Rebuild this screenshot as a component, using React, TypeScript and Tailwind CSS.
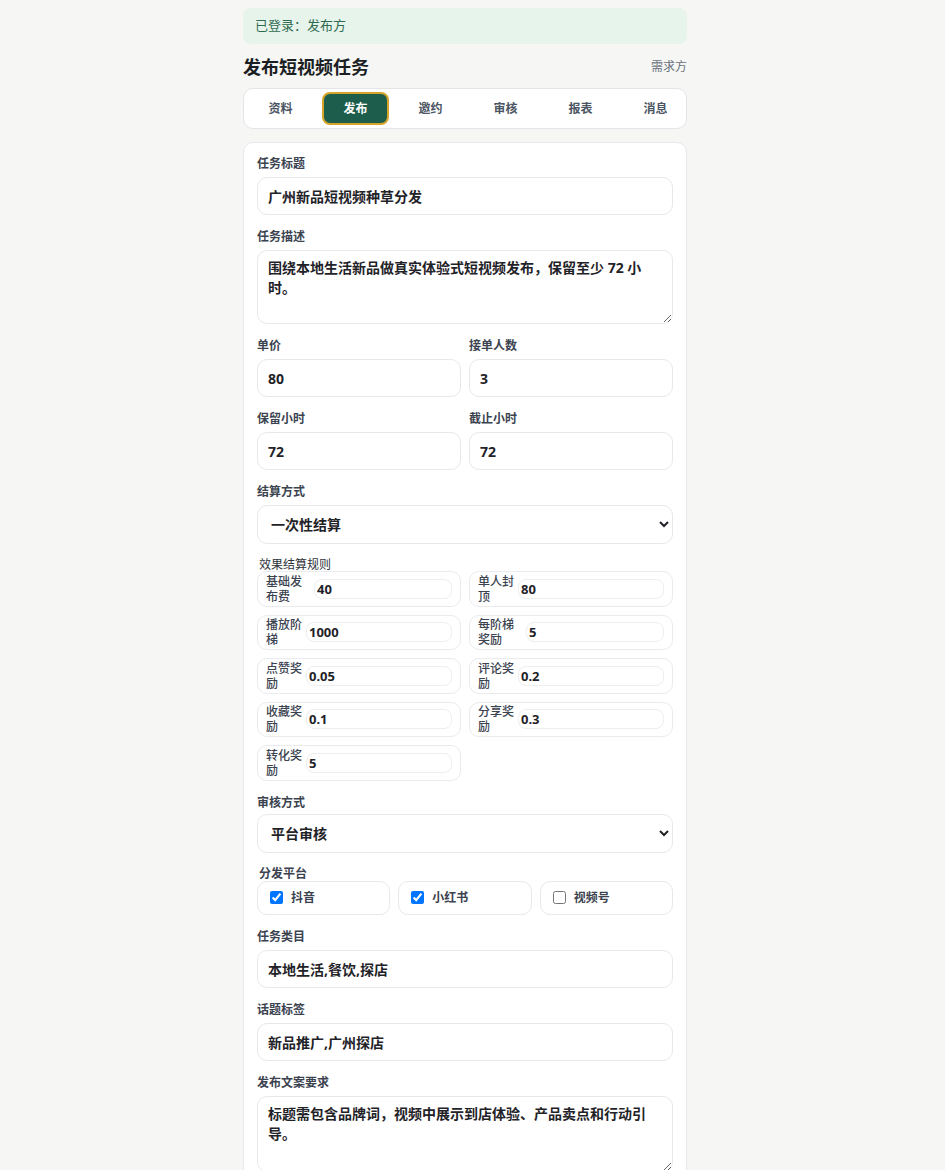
import * as React from "react";

const tabs = ["资料", "发布", "邀约", "审核", "报表", "消息"];

// 效果结算规则 — wide = 五个字的标签，输入框会往右多让一点
const rules = [
  { label: "基础发布费", value: "40", wide: true },
  { label: "单人封顶", value: "80", wide: false },
  { label: "播放阶梯", value: "1000", wide: false },
  { label: "每阶梯奖励", value: "5", wide: true },
  { label: "点赞奖励", value: "0.05", wide: false },
  { label: "评论奖励", value: "0.2", wide: false },
  { label: "收藏奖励", value: "0.1", wide: false },
  { label: "分享奖励", value: "0.3", wide: false },
  { label: "转化奖励", value: "5", wide: false },
];

const platforms = [
  { name: "抖音", checked: true },
  { name: "小红书", checked: true },
  { name: "视频号", checked: false },
];

const inputCls =
  "block w-full h-[38px] rounded-[10px] border border-[#e6e8eb] bg-white px-[10px] text-[14px] font-bold text-[#1f2328] outline-none";
const textareaCls =
  "block w-full h-[74px] rounded-[10px] border border-[#e6e8eb] bg-white px-[10px] py-[7px] text-[14px] leading-5 font-bold text-[#1f2328] outline-none";
const selectCls =
  "block w-full h-[39px] rounded-[10px] border border-[#e6e8eb] bg-white pl-[9px] pr-[3px] text-[14px] font-bold text-[#1f2328] outline-none";

const Label = ({ children, tight }: { children: React.ReactNode; tight?: boolean }) => (
  <label
    className={
      tight
        ? "block h-4 mb-[3px] text-[12px] leading-4 font-semibold text-[#3b4350]"
        : "block h-4 mb-[5px] text-[12px] leading-4 font-semibold text-[#3b4350]"
    }
  >
    {children}
  </label>
);

const Field = ({ label, value }: { label: string; value: string }) => (
  <div>
    <Label>{label}</Label>
    <input className={inputCls} defaultValue={value} />
  </div>
);

export default function App() {
  const [active, setActive] = React.useState(1);

  return (
    <div
      className="min-h-screen pr-[15px] bg-[#f6f6f4] text-[#1f2328]"
      style={{ fontFamily: '"Noto Sans", "Noto Sans CJK SC", sans-serif' }}
    >
      <div className="mx-auto w-[444px] pt-2 pb-10">
        {/* 登录状态 */}
        <div className="h-9 rounded-lg bg-[#e7f4ec] pl-3 flex items-center text-[13px] text-[#2f6a50]">
          已登录：发布方
        </div>

        {/* 标题 */}
        <div className="mt-[9px] h-7 flex items-center justify-between">
          <h1 className="text-[18px] font-bold leading-7 text-[#1b1f24]">发布短视频任务</h1>
          <span className="text-[12px] text-[#6b7280]">需求方</span>
        </div>

        {/* 标签页 */}
        <div className="mt-[7px] h-[41px] rounded-[10px] border border-[#e3e5e8] bg-white p-[3px] flex gap-2 overflow-hidden">
          {tabs.map((t, i) => (
            <button
              key={t}
              onClick={() => setActive(i)}
              className={
                i === active
                  ? "w-[67px] shrink-0 rounded-lg border-2 border-[#d6a429] bg-[#1c5e4b] text-[12px] font-bold text-white"
                  : "w-[67px] shrink-0 rounded-lg border-2 border-transparent text-[12px] font-semibold text-[#4b5563]"
              }
            >
              {t}
            </button>
          ))}
        </div>

        {/* 表单 */}
        <div className="mt-[13px] rounded-[10px] border border-[#e6e8eb] bg-white p-[13px] flex flex-col gap-[14px]">
          <Field label="任务标题" value="广州新品短视频种草分发" />

          <div>
            <Label>任务描述</Label>
            <textarea
              className={textareaCls}
              defaultValue="围绕本地生活新品做真实体验式短视频发布，保留至少 72 小时。"
            />
          </div>

          <div className="grid grid-cols-2 gap-2">
            <Field label="单价" value="80" />
            <Field label="接单人数" value="3" />
          </div>

          <div className="grid grid-cols-2 gap-2">
            <Field label="保留小时" value="72" />
            <Field label="截止小时" value="72" />
          </div>

          <div>
            <Label>结算方式</Label>
            <select className={selectCls} defaultValue="once">
              <option value="once">一次性结算</option>
              <option value="effect">按效果结算</option>
            </select>
          </div>

          <div>
            <div className="pl-[2px] h-[13px] text-[12px] leading-[13px] text-[#2d333b]">效果结算规则</div>
            <div className="grid grid-cols-2 gap-x-2 gap-y-2">
              {rules.map((r) => (
                <label
                  key={r.label}
                  className="h-[35.5px] rounded-[10px] border border-[#e9ebee] px-2 flex items-center gap-1"
                >
                  <span
                    className={
                      r.wide
                        ? "w-[44px] shrink-0 text-[12px] leading-[15px] font-medium text-[#3b4350]"
                        : "w-[36px] shrink-0 text-[12px] leading-[15px] font-medium text-[#3b4350]"
                    }
                  >
                    <span className="block w-[36px]">{r.label}</span>
                  </span>
                  <input
                    className="min-w-0 flex-1 h-5 rounded-lg border border-[#eceef0] px-[2px] text-[13px] font-bold text-[#1f2328] outline-none"
                    defaultValue={r.value}
                  />
                </label>
              ))}
            </div>
          </div>

          <div>
            <Label tight>审核方式</Label>
            <select className={selectCls} defaultValue="platform">
              <option value="platform">平台审核</option>
              <option value="self">自行审核</option>
            </select>
          </div>

          <div>
            <div className="pl-[2px] h-[14px] text-[12px] leading-[14px] font-semibold text-[#3b4350]">分发平台</div>
            <div className="grid grid-cols-3 gap-2">
              {platforms.map((p) => (
                <label
                  key={p.name}
                  className="h-[34px] rounded-[10px] border border-[#e6e8eb] px-3 flex items-center gap-2 text-[12px] font-semibold text-[#3b4350]"
                >
                  <input type="checkbox" defaultChecked={p.checked} className="m-0 h-[13px] w-[13px]" />
                  {p.name}
                </label>
              ))}
            </div>
          </div>

          <Field label="任务类目" value="本地生活,餐饮,探店" />
          <Field label="话题标签" value="新品推广,广州探店" />

          <div>
            <Label>发布文案要求</Label>
            <textarea
              className={textareaCls + " h-[76px]"}
              defaultValue="标题需包含品牌词，视频中展示到店体验、产品卖点和行动引导。"
            />
          </div>

          <button className="h-10 rounded-[10px] bg-[#1c5e4b] text-[14px] font-bold text-white">发布任务</button>
        </div>
      </div>
    </div>
  );
}
